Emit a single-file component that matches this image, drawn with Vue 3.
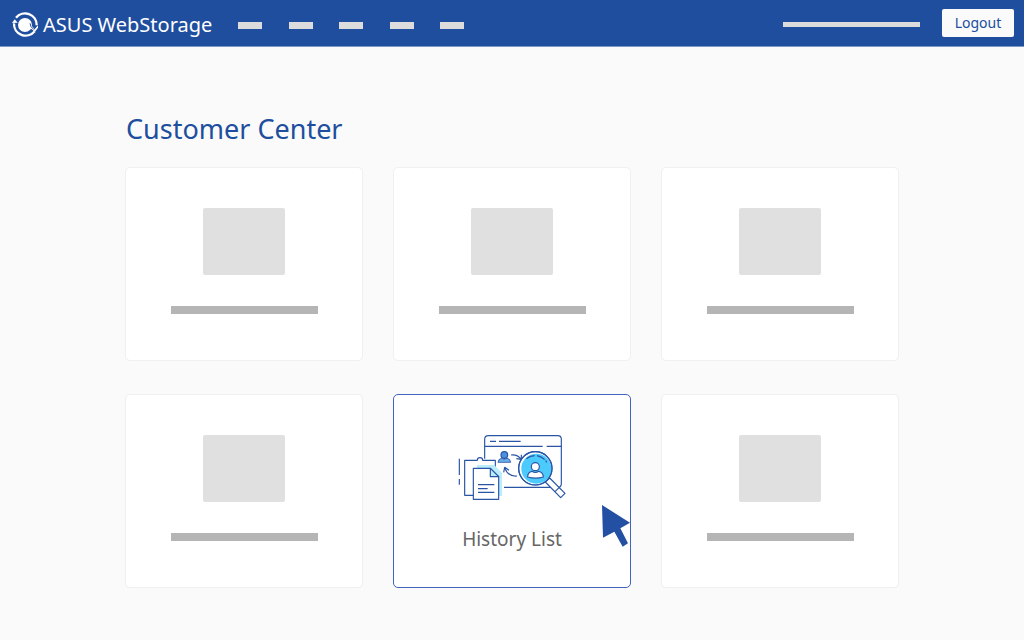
<template>
  <div class="page">
    <header class="topbar">
      <a class="brand" href="#">
        <svg class="logo" viewBox="0 0 78 78" aria-hidden="true">
          <circle cx="39" cy="39" r="21" fill="#fff" />
          <path d="M12 17A35 35 0 0 1 74 40" fill="none" stroke="#fff" stroke-width="7" />
          <path d="M68 58A35 35 0 0 1 6 34" fill="none" stroke="#fff" stroke-width="7" />
          <path d="M0 33L8 22L17 32Z" fill="#fff" />
          <path d="M57 39L68 52L78 40V47L69 59L55 49Z" fill="#fff" />
          <path d="M54 34L57 44L66 53" fill="none" stroke="#204e9e" stroke-width="3" />
        </svg>
        <span>ASUS WebStorage</span>
      </a>
      <nav class="menu" aria-label="Main">
        <a v-for="n in 5" :key="n" class="menu-item" href="#"></a>
      </nav>
      <div class="account">
        <span class="account-name"></span>
        <button class="logout" type="button">Logout</button>
      </div>
    </header>

    <main class="content">
      <h1>Customer Center</h1>
      <div class="cards">
        <article v-for="card in cards" :key="card.id" class="card" :class="{ active: card.title }">
          <template v-if="card.title">
            <svg class="history-icon" viewBox="27 27 324 198" aria-hidden="true">
              <g fill="none" stroke="#2a55a5" stroke-width="3.5" stroke-linejoin="round">
                <path d="M107 98V40Q107 29 118 29H326Q337 29 337 40V173Q337 184 326 184H165" fill="#fff" />
                <path d="M107 61H281M293 61H337M123 46H141M150 46H215" />
                <path d="M31 98V147M31 159V176" />
                <path d="M47 103H85A8 8 0 0 1 101 103H139V208H47Z" fill="#fff" />
              </g>
              <path d="M84 117H136L159 141V210H84Z" fill="#b9edfb" />
              <g fill="none" stroke="#2a55a5" stroke-width="3.5" stroke-linejoin="round">
                <path d="M73 127H124L149 152V220H73Z" fill="#fff" />
                <path d="M124 127V152H149Z" fill="#b9edfb" />
                <path d="M87 176H136M87 188H116M87 199H136" />
                <circle cx="166" cy="87" r="10" fill="#4c91dd" />
                <path d="M147 109Q148 98 158 97Q166 104 174 97Q184 98 185 109Z" fill="#6aaeed" stroke-width="2.5" />
                <path d="M186 87Q204 84 216 99M217 86V100L202 98" />
                <path d="M204 150Q177 152 168 127M164 139L167 124L180 133" />
                <path d="M289 168L302 156L348 202L335 215Z" fill="#fff" />
                <path d="M318 197L331 184" />
                <circle cx="259" cy="127" r="50" fill="#fff" />
              </g>
              <circle cx="262" cy="128" r="45" fill="#4dcafc" />
              <g fill="none" stroke="#2a55a5" stroke-width="3.5">
                <circle cx="259" cy="127" r="50" />
                <path d="M232 98Q244 89 257 89M264 89Q278 92 287 101M290 104L293 109" />
                <circle cx="259" cy="122" r="12" fill="#fff" />
                <path d="M236 153Q236 138 249 136Q259 143 269 136Q282 138 283 153Q260 160 236 153Z" fill="#fff" />
              </g>
            </svg>
            <h2>{{ card.title }}</h2>
            <svg class="pointer" viewBox="0 0 84 126" aria-hidden="true">
              <path d="M0 0L84 53L55 70L78 115L62 125L37 80L3 98Z" fill="#2450a4" />
            </svg>
          </template>
          <template v-else>
            <div class="thumb"></div>
            <div class="line"></div>
          </template>
        </article>
      </div>
    </main>
  </div>
</template>

<script setup>
const cards = [
  { id: 1 },
  { id: 2 },
  { id: 3 },
  { id: 4 },
  { id: 5, title: 'History List' },
  { id: 6 }
];
</script>

<style>
body {
  background: #fafafa;
}
</style>

<style scoped>
.page {
  min-height: 100vh;
  background: #fafafa;
  font-family: "Noto Sans", "Open Sans", sans-serif;
}

.topbar {
  box-sizing: border-box;
  height: 47px;
  padding: 0 10px 0 12px;
  display: flex;
  align-items: center;
  background: #204e9e;
  border-bottom: 1px solid #7c98c8;
}

.brand {
  display: flex;
  align-items: center;
  gap: 5px;
  padding-top: 3px;
  color: #fff;
  font-size: 20px;
  line-height: 28px;
  text-decoration: none;
  white-space: nowrap;
}

.logo {
  width: 26px;
  height: 26px;
}

.menu {
  display: flex;
  justify-content: space-between;
  width: 226px;
  margin-left: 26px;
  padding-top: 4px;
}

.menu-item {
  width: 24px;
  height: 7px;
  background: #dcdcdc;
}

.account {
  display: flex;
  align-items: center;
  gap: 22px;
  margin-left: auto;
}

.account-name {
  width: 137px;
  height: 5px;
  margin-top: 2px;
  background: #dcdcdc;
}

.logout {
  width: 72px;
  height: 28px;
  padding: 0;
  border: none;
  border-radius: 2px;
  background: #fafafa;
  color: #204e9e;
  font-family: inherit;
  font-size: 14px;
  line-height: 28px;
  cursor: pointer;
}

.content {
  max-width: 774px;
  margin: 0 auto;
  padding: 64px 20px 52px;
}

h1 {
  margin: 0 0 20px;
  padding-left: 1px;
  color: #204e9e;
  font-size: 27px;
  font-weight: 400;
  line-height: 36px;
}

.cards {
  display: grid;
  grid-template-columns: repeat(3, 1fr);
  gap: 33px 30px;
}

.card {
  position: relative;
  box-sizing: border-box;
  min-height: 194px;
  padding: 40px 16px 32px;
  display: flex;
  flex-direction: column;
  align-items: center;
  background: #fff;
  border: 1px solid #f0f0f0;
  border-radius: 5px;
}

.card.active {
  border-color: #4263c0;
}

.thumb {
  width: 82px;
  height: 67px;
  border-radius: 2px;
  background: #e0e0e0;
}

.line {
  width: 147px;
  height: 8px;
  margin-top: 31px;
  background: #b5b5b5;
}

.history-icon {
  width: 108px;
  height: 66px;
}

h2 {
  margin: 24px 0 0;
  color: #666;
  font-size: 19px;
  font-weight: 400;
  line-height: 28px;
}

.pointer {
  position: absolute;
  right: 0;
  bottom: 40px;
  width: 28px;
  height: 42px;
}
</style>
